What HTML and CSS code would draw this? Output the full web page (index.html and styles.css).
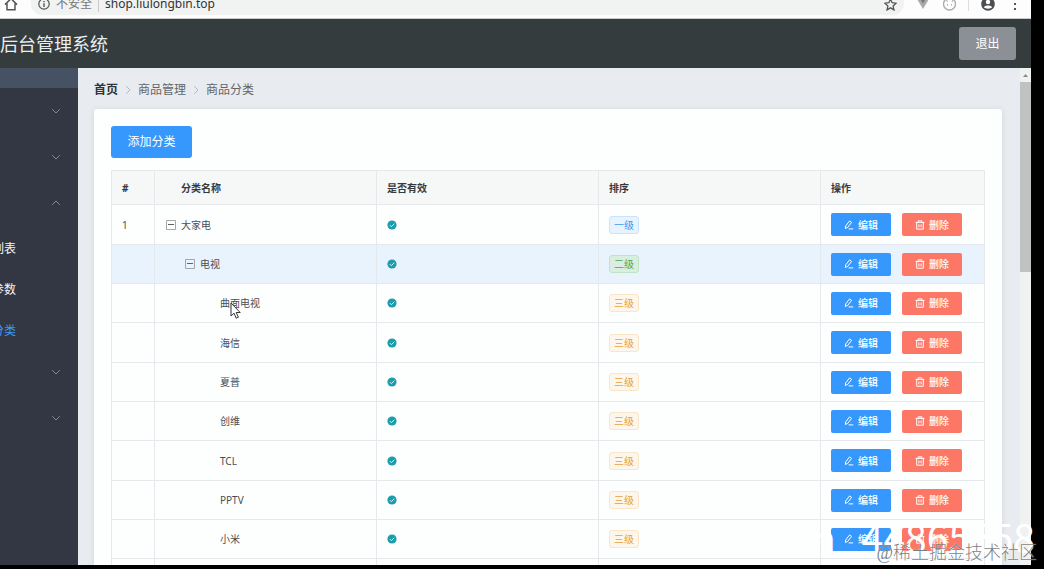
FILE: index.html
```
<!DOCTYPE html>
<html lang="zh-CN">
<head>
<meta charset="utf-8">
<title>后台管理系统</title>
<link rel="stylesheet" href="styles.css">
</head>
<body>
<svg class="sprite" aria-hidden="true">
	<symbol id="minus" viewBox="0 0 10 10"><path d="M.5.5h9v9h-9z" fill="none" stroke="#a3a7ab"/><path d="M2 4.5h6" stroke="#5d6167"/></symbol>
	<symbol id="ok" viewBox="0 0 10 10"><circle cx="5" cy="5" r="4.6" fill="#1d9dab"/><path d="M2.8 5.1l1.6 1.6 2.9-3" fill="none" stroke="#d8f3f5"/></symbol>
	<symbol id="edit" viewBox="0 0 10 10"><path d="M1.4 8.5l.3-2.6L5.6.9l2 1.5-3.9 5zM4.6 8.9h4.6" fill="none" stroke="currentColor"/></symbol>
	<symbol id="del" viewBox="0 0 10 10"><path d="M.6 2.4h8.8M3.2 2.2V.8h3.6v1.4M1.7 2.6v6.6h6.6V2.6M3.9 4.4v3M6.1 4.4v3" fill="none" stroke="currentColor"/></symbol>
	<symbol id="arrow" viewBox="0 0 10 10"><path d="M1.2 3.2L5 7l3.8-3.8" fill="none" stroke="currentColor"/></symbol>
</svg>
<div class="screen">
	<div class="toolbar">
		<svg class="home" viewBox="0 0 14 14"><path d="M1 7.6L7 1.6l6 6M3 6.6v6.2h8V6.6" fill="none" stroke="#555" stroke-width="1.5"/></svg>
		<div class="address">
			<svg class="info" viewBox="0 0 12 12"><circle cx="6" cy="6" r="5.2" fill="none" stroke="#555" stroke-width="1.2"/><path d="M6 5.3v3.6M6 3v1.3" stroke="#555" stroke-width="1.4"/></svg>
			<span class="insecure">不安全</span>
			<span class="url">shop.liulongbin.top</span>
			<svg class="star" viewBox="0 0 12 12"><path d="M6 1l1.5 3.4 3.7.4-2.8 2.5.8 3.7L6 9.1 2.8 11l.8-3.7L.8 4.8l3.7-.4z" fill="none" stroke="#555" stroke-width="1.2"/></svg>
		</div>
		<div class="extras">
			<svg class="vue" viewBox="0 0 12 12"><path d="M0 1h12L6 11z" fill="#aaa"/><path d="M3.5 1h5L6 5.4z" fill="#777"/></svg>
			<svg class="ext" viewBox="0 0 14 14"><circle cx="7" cy="7" r="6" fill="none" stroke="#aaa" stroke-width="1.3"/><path d="M3.5 3.5l2 1M10.5 3l-1 2M5 7v1.5M9 7v1.5" stroke="#aaa"/></svg>
			<svg class="user" viewBox="0 0 14 14"><circle cx="7" cy="7" r="6.8" fill="#4b4f53"/><circle cx="7" cy="5" r="2.2" fill="#fff"/><path d="M2.8 10.3C4 7.9 10 7.9 11.2 10.3 9.6 12.2 4.4 12.2 2.8 10.3z" fill="#fff"/></svg>
			<svg class="dots" viewBox="0 0 4 14"><path d="M1 1h2v2H1zM1 6h2v2H1zM1 11h2v2H1z" fill="#555"/></svg>
		</div>
	</div>
	<header class="header">
		<h1>后台管理系统</h1>
		<button class="logout" type="button">退出</button>
	</header>
	<div class="wrap">
		<nav class="aside">
			<div class="fold"></div>
			<button class="menu" type="button" aria-label="菜单"><svg><use href="#arrow"/></svg></button>
			<button class="menu" type="button" aria-label="菜单"><svg><use href="#arrow"/></svg></button>
			<button class="menu open" type="button" aria-label="菜单"><svg><use href="#arrow"/></svg></button>
			<a class="sub" href="#">列表</a>
			<a class="sub" href="#">参数</a>
			<a class="sub active" href="#">分类</a>
			<button class="menu" type="button" aria-label="菜单"><svg><use href="#arrow"/></svg></button>
			<button class="menu" type="button" aria-label="菜单"><svg><use href="#arrow"/></svg></button>
		</nav>
		<main class="main">
			<div class="crumb">
				<a class="first" href="#">首页</a><svg><use href="#arrow"/></svg><span>商品管理</span><svg><use href="#arrow"/></svg><span>商品分类</span>
			</div>
			<div class="card">
				<button class="add" type="button">添加分类</button>
				<table class="tree">
					<thead>
						<tr><th class="c-index">#</th><th class="c-name">分类名称</th><th>是否有效</th><th>排序</th><th class="c-action">操作</th></tr>
					</thead>
					<tbody>
						<tr>
							<td>1</td>
							<td><div class="name"><svg><use href="#minus"/></svg>大家电</div></td>
							<td><svg><use href="#ok"/></svg></td>
							<td><span class="tag one">一级</span></td>
							<td><div class="btns"><button class="edit" type="button"><svg><use href="#edit"/></svg>编辑</button><button class="del" type="button"><svg><use href="#del"/></svg>删除</button></div></td>
						</tr>
						<tr class="hover">
							<td></td>
							<td><div class="name lv2"><svg><use href="#minus"/></svg>电视</div></td>
							<td><svg><use href="#ok"/></svg></td>
							<td><span class="tag two">二级</span></td>
							<td><div class="btns"><button class="edit" type="button"><svg><use href="#edit"/></svg>编辑</button><button class="del" type="button"><svg><use href="#del"/></svg>删除</button></div></td>
						</tr>
						<tr>
							<td></td>
							<td><div class="name lv3">曲面电视<svg class="cursor" viewBox="0 0 12 18"><path d="M1 1v13l3-2.8 2.2 5 2.2-1-2.2-4.7h4z" fill="#fff" stroke="#333"/></svg></div></td>
							<td><svg><use href="#ok"/></svg></td>
							<td><span class="tag">三级</span></td>
							<td><div class="btns"><button class="edit" type="button"><svg><use href="#edit"/></svg>编辑</button><button class="del" type="button"><svg><use href="#del"/></svg>删除</button></div></td>
						</tr>
						<tr>
							<td></td>
							<td><div class="name lv3">海信</div></td>
							<td><svg><use href="#ok"/></svg></td>
							<td><span class="tag">三级</span></td>
							<td><div class="btns"><button class="edit" type="button"><svg><use href="#edit"/></svg>编辑</button><button class="del" type="button"><svg><use href="#del"/></svg>删除</button></div></td>
						</tr>
						<tr>
							<td></td>
							<td><div class="name lv3">夏普</div></td>
							<td><svg><use href="#ok"/></svg></td>
							<td><span class="tag">三级</span></td>
							<td><div class="btns"><button class="edit" type="button"><svg><use href="#edit"/></svg>编辑</button><button class="del" type="button"><svg><use href="#del"/></svg>删除</button></div></td>
						</tr>
						<tr>
							<td></td>
							<td><div class="name lv3">创维</div></td>
							<td><svg><use href="#ok"/></svg></td>
							<td><span class="tag">三级</span></td>
							<td><div class="btns"><button class="edit" type="button"><svg><use href="#edit"/></svg>编辑</button><button class="del" type="button"><svg><use href="#del"/></svg>删除</button></div></td>
						</tr>
						<tr>
							<td></td>
							<td><div class="name lv3">TCL</div></td>
							<td><svg><use href="#ok"/></svg></td>
							<td><span class="tag">三级</span></td>
							<td><div class="btns"><button class="edit" type="button"><svg><use href="#edit"/></svg>编辑</button><button class="del" type="button"><svg><use href="#del"/></svg>删除</button></div></td>
						</tr>
						<tr>
							<td></td>
							<td><div class="name lv3">PPTV</div></td>
							<td><svg><use href="#ok"/></svg></td>
							<td><span class="tag">三级</span></td>
							<td><div class="btns"><button class="edit" type="button"><svg><use href="#edit"/></svg>编辑</button><button class="del" type="button"><svg><use href="#del"/></svg>删除</button></div></td>
						</tr>
						<tr>
							<td></td>
							<td><div class="name lv3">小米</div></td>
							<td><svg><use href="#ok"/></svg></td>
							<td><span class="tag">三级</span></td>
							<td><div class="btns"><button class="edit" type="button"><svg><use href="#edit"/></svg>编辑</button><button class="del" type="button"><svg><use href="#del"/></svg>删除</button></div></td>
						</tr>
						<tr><td></td><td></td><td></td><td></td><td></td></tr>
					</tbody>
				</table>
			</div>
		</main>
		<div class="scrollbar">
			<svg viewBox="0 0 11 14"><path d="M3 9l2.5-3L8 9z" fill="#888"/></svg>
			<div class="thumb"></div>
		</div>
	</div>
</div>
<div class="overlay number"><span>n</span><span>44865558</span></div>
<div class="overlay mark">@稀土掘金技术社区</div>
</body>
</html>
```
FILE: styles.css
```
*{box-sizing:border-box;}
body{
	margin:0;
	height:100vh;
	padding:0 13px 4px 0;
	overflow:hidden;
	position:relative;
	background:#000;
	color:#4a4e54;
	font:10px/16px "Noto Sans", "Noto Sans CJK SC", sans-serif;
}
button{border:0; padding:0; font:inherit; color:#fff; display:flex; align-items:center; justify-content:center;}
a{color:inherit; text-decoration:none;}
svg{display:block; width:10px; height:10px; flex:none;}
.sprite{position:absolute; width:0; height:0;}
.screen{height:100%; display:flex; flex-direction:column; overflow:hidden; background:#e8ecf0;}

/* browser bar */
.toolbar{flex:none; height:19px; padding:0 14px 3px 4px; display:flex; align-items:flex-end; gap:13px; background:#fdfdfd; overflow:hidden; border-bottom:1px solid #c9cccc;}
.home{width:14px; height:22px;}
.address{flex:1; height:22px; padding:0 7px; display:flex; align-items:center; background:#f1f2f2; border-radius:0 0 11px 11px; font-size:12px;}
.info{width:12px; height:12px;}
.insecure{margin-left:6px; padding-right:6px; color:#777; border-right:1px solid #ccc;}
.url{margin-left:6px; color:#333;}
.star{width:13px; height:13px; margin-left:auto;}
.extras{height:22px; display:flex; align-items:center;}
.vue{width:12px; height:12px; margin-right:13px;}
.ext{width:15px; height:14px; margin-right:11px;}
.user{width:14px; height:14px; padding-left:12px; border-left:1px solid #ddd; margin-right:18px; box-sizing:content-box;}
.dots{width:4px; height:14px;}

.header{flex:none; height:49px; padding-right:15px; display:flex; align-items:center; justify-content:space-between; background:#353c3e; color:#e9eef0;}
.header h1{margin:0; font-size:18px; line-height:24px; font-weight:400;}
.logout{width:57px; height:33px; border-radius:3px; background:#8b8f96; font-size:12px;}

.wrap{flex:1; min-height:0; display:flex;}
.aside{flex:none; width:78px; background:#333743; overflow:hidden; font-size:12px;}
.fold{height:20px; background:#465164;}
.menu{width:100%; height:46px; padding-right:17px; justify-content:flex-end; background:none; color:#858991;}
.open svg{transform:rotate(180deg);}
.sub{height:41px; padding:4px 62px 0 0; display:flex; align-items:center; justify-content:flex-end; white-space:nowrap; color:#f4f5f6;}
.active{color:#3f97f0;}

.main{flex:1; min-width:0; padding:14px 18px 0 16px; overflow:hidden;}
.crumb{display:flex; align-items:center; gap:5px; margin-bottom:11px; font-size:12px; color:#62666c;}
.crumb svg{transform:rotate(-90deg); color:#b4b9c0;}
.first{color:#303338; font-weight:700;}
.card{padding:17px; background:#fdfefe; border-radius:3px 3px 0 0; box-shadow:0 1px 6px rgba(0,0,0,.1);}
.add{width:81px; height:32px; margin-bottom:12px; border-radius:3px; background:#3698fd; font-size:12px;}

.tree{width:100%; table-layout:fixed; border-collapse:collapse; border:1px solid #e6e9ec;}
.tree th{height:34px; padding:0 10px; text-align:left; background:#f6f8f8; color:#353a40;}
.tree td{height:39px; padding:0 10px;}
.tree tbody tr:nth-child(3n+1) td{height:40px;}
.tree th, .tree td{border:1px solid #e6e9ec;}
.tree .c-index{width:43px;}
.tree .c-name{padding-left:26px;}
.tree .c-action{width:164px;}
.hover{background:#e8f3fe;}
.name{position:relative; display:flex; align-items:center; gap:5px; padding-left:1px;}
.lv2{padding-left:20px;}
.lv3{padding-left:55px;}
.cursor{position:absolute; left:65px; top:7px; width:12px; height:18px;}
.tag{display:inline-block; padding:0 4px; border:1px solid #fae5c7; border-radius:3px; background:#fdf6ec; color:#e6a23c;}
.one{border-color:#cbe3fb; background:#e7f3fe; color:#3f97f0;}
.two{border-color:#c0e3c5; background:#d9eee0; color:#55a846;}
.btns{display:flex; gap:11px;}
.btns button{width:60px; height:23px; gap:4px; border-radius:2px; font-weight:500;}
.btns .edit{background:#3698fd;}
.btns .del{background:#fd7767;}

.scrollbar{flex:none; width:11px; background:#f0f1f1;}
.scrollbar svg{width:11px; height:14px;}
.thumb{height:190px; background:#c0c1c1;}

/* watermarks lie over the whole page */
.overlay{position:absolute; white-space:nowrap;}
.number{right:9px; bottom:9px; display:flex; gap:26px; color:#fff; font:39px/48px "Noto Sans CJK SC", sans-serif;}
.mark{right:7px; bottom:4px; color:rgba(80,84,88,.75); font:300 18px/24px "Liberation Serif", "Noto Sans CJK SC", serif; text-shadow:0 0 1px #fff;}
```
